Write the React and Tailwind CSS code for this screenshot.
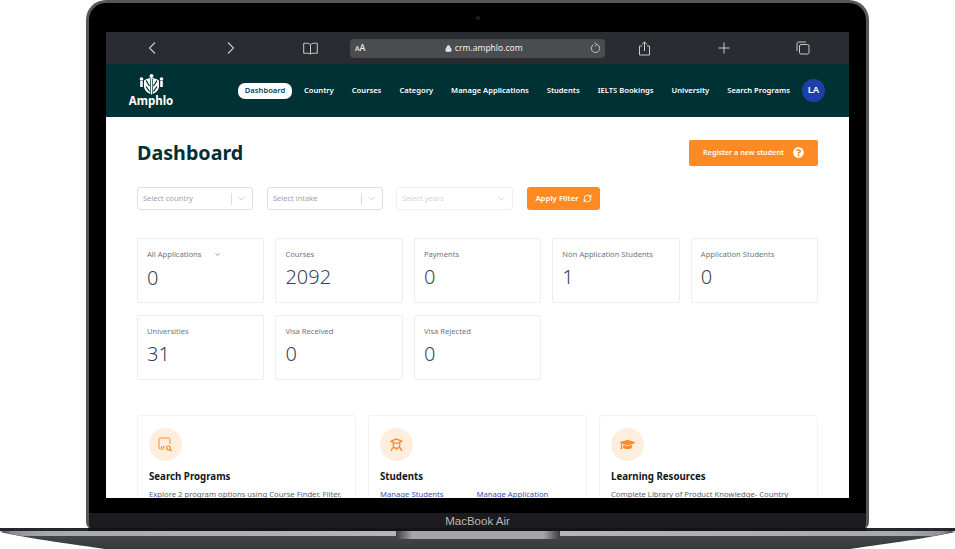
import { ChevronDown, RefreshCw, Lock } from 'lucide-react'
import { FaGraduationCap, FaQuestionCircle } from 'react-icons/fa'

const navItems = ['Country', 'Courses', 'Category', 'Manage Applications', 'Students', 'IELTS Bookings', 'University', 'Search Programs']

const statsTop = [
  { label: 'Courses', value: '2092' },
  { label: 'Payments', value: '0' },
  { label: 'Non Application Students', value: '1' },
  { label: 'Application Students', value: '0' },
]
const statsBottom = [
  { label: 'Universities', value: '31' },
  { label: 'Visa Received', value: '0' },
  { label: 'Visa Rejected', value: '0' },
]

function Logo() {
  return (
    <svg width="25" height="21" viewBox="0 0 25 21" fill="none">
      <circle cx="12.500" cy="2" r="2" fill="#fff" />
      <circle cx="2.500" cy="5" r="1.800" fill="#fff" />
      <circle cx="22.500" cy="5" r="1.800" fill="#fff" />
      <path d="M2.500 7v6M22.500 7v6" stroke="#fff" strokeWidth="2.600" />
      <path d="M5 6.500c2-1.700 4.500-2.300 7.500-2.300s5.500.6 7.500 2.300v5.500c0 4-3 7-7.500 8.500C8 19 5 16 5 12z" fill="#fff" />
      <path d="M7 6.500l3.500 5.500M18 6.500l-3.500 5.500M7 12.500l3.500 5M18 12.500l-3.500 5" stroke="#003135" strokeWidth="1.300" />
      <path d="M11.500 5v15.500M13.500 5v15.500" stroke="#003135" strokeWidth="0.700" />
    </svg>
  )
}

function SafariBar() {
  const stroke = '#c9cacc'
  return (
    <div className="flex h-[32px] items-center bg-[#292c30]">
      <svg className="ml-[41px]" width="10" height="14" viewBox="0 0 10 14" fill="none">
        <path d="M8 1.500 2.500 7 8 12.500" stroke={stroke} strokeWidth="1.100" />
      </svg>
      <svg className="ml-[69px]" width="10" height="14" viewBox="0 0 10 14" fill="none">
        <path d="M2 1.500 7.500 7 2 12.500" stroke={stroke} strokeWidth="1.100" />
      </svg>
      <svg className="ml-[67px]" width="15" height="13" viewBox="0 0 15 13" fill="none">
        <path d="M7.500 2.500C6 1.200 3.500 1 .7 1.300v10c2.800-.3 5.300-.1 6.800.7 1.500-.8 4-1 6.800-.7v-10C11.500 1 9 1.200 7.500 2.500zM7.500 2.500V12" stroke={stroke} strokeWidth="1" />
      </svg>
      <div className="ml-[32px] flex h-[19px] w-[255px] items-center rounded-[4px] bg-[#4a4c50] pl-[5px] pr-[4px] text-[#eeeeef]">
        <span className="flex items-baseline font-medium">
          <span className="text-[7px]">A</span>
          <span className="text-[9px]">A</span>
        </span>
        <div className="flex flex-1 items-center justify-center gap-[3px] pl-[12px] text-[8.500px]">
          <Lock size={7} fill="#e4e4e5" />
          <span>crm.amphlo.com</span>
        </div>
        <svg width="11" height="12" viewBox="0 0 11 12" fill="none">
          <path d="M6.500 2.300a4.200 4.200 0 1 1-3.200.5M4.500 .6l2.200 1.700-2 1.900" stroke={stroke} strokeWidth="0.900" />
        </svg>
      </div>
      <svg className="ml-[33px]" width="13" height="15" viewBox="0 0 13 15" fill="none">
        <path d="M4 5H1.500v9h10V5H9M6.500 10V1M4 3.300 6.500 1 9 3.300" stroke={stroke} strokeWidth="1" />
      </svg>
      <svg className="ml-[67px]" width="12" height="12" viewBox="0 0 12 12" fill="none">
        <path d="M6 .5v11M.5 6h11" stroke={stroke} strokeWidth="1" />
      </svg>
      <svg className="ml-[66px]" width="14" height="14" viewBox="0 0 14 14" fill="none">
        <rect x="3.500" y="3.500" width="9.500" height="9.500" rx="1.500" stroke={stroke} />
        <path d="M1 10V2.500A1.500 1.500 0 0 1 2.500 1H10" stroke={stroke} />
      </svg>
    </div>
  )
}

function TopNav() {
  return (
    <div className="flex h-[53px] items-center bg-[#003135] pl-[23px] text-white">
      <div className="flex w-[44px] flex-col items-center">
        <Logo />
        <span className="mt-[-1px] text-[11.500px] font-bold leading-[14px]">Amphlo</span>
      </div>
      <div className="ml-[65px] flex items-center gap-[18px] text-[7.600px] font-semibold">
        <span className="-mr-[6px] flex h-[16px] w-[54px] items-center justify-center rounded-[7px] bg-white text-[#003f5c]">Dashboard</span>
        {navItems.map((item) => (
          <span key={item} className="whitespace-nowrap">{item}</span>
        ))}
      </div>
      <div className="ml-[12px] flex size-[23px] items-center justify-center rounded-full bg-[#1e3ea8] text-[9.500px] font-semibold">LA</div>
    </div>
  )
}

function SelectBox({ label, muted, plain, w }) {
  return (
    <div className={`flex h-[23px] items-center rounded-[3px] border pl-[5px] pr-[5px] text-[7.500px] ${w} ${muted ? 'border-[#f0f0f0] text-[#d5d5d5]' : 'border-[#e0e0e0] text-[#a3a3a3]'}`}>
      <span className="flex-1">{label}</span>
      {!plain && <span className="mr-[4px] h-[12px] w-px bg-[#dddddd]" />}
      <ChevronDown size={11} strokeWidth={1.200} className={muted ? 'text-[#bbbbbb]' : 'text-[#aaaaaa]'} />
    </div>
  )
}

function StatCard({ label, value }) {
  return (
    <div className="h-[65px] rounded-[2px] border border-[#eeeeee] pl-[9px] pt-[8px]">
      <div className="text-[7.600px] leading-[14px] text-[#6f7680]">{label}</div>
      <div className="mt-[2px] text-[20px] font-light leading-[28px] text-[#3a4556]">{value}</div>
    </div>
  )
}

function ActionCard({ icon, title, children }) {
  return (
    <div className="h-[100px] rounded-[3px] border border-[#f3f3f3] pl-[11px] pt-[12px]">
      <div className="flex size-[33px] items-center justify-center rounded-full bg-[#ffeedd]">{icon}</div>
      <div className="mt-[9px] text-[9.700px] font-bold leading-[14px] text-[#101820]">{title}</div>
      <div className="mt-[4px] text-[7.700px] leading-[12px] text-[#5c6470]">{children}</div>
    </div>
  )
}

function Dashboard() {
  return (
    <div className="flex-1 overflow-hidden bg-white px-[31px] pt-[22px]">
      <div className="flex items-center justify-between">
        <h1 className="text-[19.700px] font-bold leading-[27px] text-[#023034]">Dashboard</h1>
        <button className="flex h-[26px] w-[129px] items-center justify-center gap-[9px] rounded-[2px] bg-[#fd8a22] text-[7.200px] font-semibold text-white">
          Register a new student
          <FaQuestionCircle size={11} />
        </button>
      </div>

      <div className="mt-[21px] flex items-center">
        <SelectBox label="Select country" w="w-[116px]" />
        <div className="w-[14px]" />
        <SelectBox label="Select intake" w="w-[116px]" />
        <div className="w-[13px]" />
        <SelectBox label="Select years" muted plain w="w-[117px]" />
        <button className="ml-[14px] flex h-[23px] w-[73px] items-center justify-center gap-[4px] rounded-[3px] bg-[#fd8a22] text-[7.800px] font-semibold text-white">
          Apply Filter
          <RefreshCw size={9} strokeWidth={2.500} />
        </button>
      </div>

      <div className="mt-[28px] grid grid-cols-5 gap-x-[11.250px] gap-y-[12px]">
        <div className="h-[65px] rounded-[2px] border border-[#eeeeee] pl-[9px] pt-[8px]">
          <div className="flex items-center text-[7.600px] leading-[14px] text-[#6f7680]">
            All Applications
            <ChevronDown size={7} strokeWidth={2} className="ml-[13px] text-[#555555]" />
          </div>
          <div className="mt-[3px] text-[20px] font-light leading-[28px] text-[#3a4556]">0</div>
        </div>
        {statsTop.map((s) => <StatCard key={s.label} {...s} />)}
        {statsBottom.map((s) => <StatCard key={s.label} {...s} />)}
      </div>

      <div className="mt-[35px] grid grid-cols-3 gap-x-[12px]">
        <ActionCard
          title="Search Programs"
          icon={
            <svg width="15" height="15" viewBox="0 0 15 15" fill="none" stroke="#fd8a22" strokeWidth="1">
              <path d="M6 12H2.500A1.500 1.500 0 0 1 1 10.500v-8A1.500 1.500 0 0 1 2.500 1h8A1.500 1.500 0 0 1 12 2.500V7" />
              <circle cx="10.500" cy="11" r="2" strokeWidth="1.200" />
              <path d="m12 12.500 1.800 1.800M3.500 11V9.500M5.500 11V9" strokeWidth="1.200" />
            </svg>
          }
        >
          Explore 2 program options using Course Finder. Filter,
        </ActionCard>
        <ActionCard
          title="Students"
          icon={
            <svg width="13" height="14" viewBox="0 0 14 15" fill="none" stroke="#fd8a22" strokeWidth="1.400">
              <path d="M7 1 1 3.500 7 6l6-2.500zM3.500 5v2.500a3.500 3.500 0 0 0 7 0V5M1.500 14c0-2.500 2-4 3-4L7 12l2.500-2c1 0 3 1.500 3 4" />
            </svg>
          }
        >
          <div className="flex gap-[33px] text-[#3f51b5] underline">
            <span>Manage Students</span>
            <span>Manage Application</span>
          </div>
        </ActionCard>
        <ActionCard title="Learning Resources" icon={<FaGraduationCap size={15} color="#fd8a22" />}>
          Complete Library of Product Knowledge- Country
        </ActionCard>
      </div>
    </div>
  )
}

function Base() {
  return (
    <svg className="-mt-[2px] block" width="955" height="21" viewBox="0 0 955 21">
      <defs>
        <linearGradient id="deck" x1="0" y1="0" x2="0" y2="1">
          <stop offset="0" stopColor="#4a4b50" />
          <stop offset="1" stopColor="#36373b" />
        </linearGradient>
        <linearGradient id="bandLeft" x1="0" y1="0" x2="1" y2="0">
          <stop offset="0" stopColor="#3a3b3f" />
          <stop offset="0.03" stopColor="#8e8f93" />
          <stop offset="0.12" stopColor="#a8a9ad" />
          <stop offset="1" stopColor="#b4b5b8" />
        </linearGradient>
        <linearGradient id="bandRight" x1="1" y1="0" x2="0" y2="0">
          <stop offset="0" stopColor="#3a3b3f" />
          <stop offset="0.03" stopColor="#8e8f93" />
          <stop offset="0.12" stopColor="#a8a9ad" />
          <stop offset="1" stopColor="#b4b5b8" />
        </linearGradient>
        <linearGradient id="notch" x1="0" y1="0" x2="1" y2="0">
          <stop offset="0" stopColor="#3c3d41" />
          <stop offset="0.1" stopColor="#a5a6a9" />
          <stop offset="0.9" stopColor="#a5a6a9" />
          <stop offset="1" stopColor="#3c3d41" />
        </linearGradient>
      </defs>
      <path d="M0 4h955v0C925 11 875 17 850 21H105C80 17 30 11 0 4z" fill="url(#deck)" />
      <path d="M0 3h396v5H22C14 7 7 5 0 3z" fill="url(#bandLeft)" />
      <path d="M955 3H560v5h373c8-1 15-3 22-5z" fill="url(#bandRight)" />
      <path d="M396 2h164v7a2 2 0 0 1-2 2H398a2 2 0 0 1-2-2z" fill="url(#notch)" />
      <path d="M0 0h88v3H0zM867 0h88v3H867z" fill="#23262b" />
      <path d="M88 0h779v3H88z" fill="#141416" />
    </svg>
  )
}

export default function App() {
  return (
    <div className="h-[549px] w-[955px] overflow-hidden bg-white font-['Noto_Sans',sans-serif]">
      <div className="ml-[86px] flex h-[530px] w-[783px] flex-col rounded-t-[20px] rounded-b-[8px] border-[3px] border-b-0 border-[#55575b] bg-black">
        <div className="flex h-[29px] items-center justify-center">
          <span className="size-[4px] rounded-full bg-[#1c1f24]" />
        </div>
        <div className="mx-[17px] flex h-[466px] flex-col overflow-hidden">
          <SafariBar />
          <TopNav />
          <Dashboard />
        </div>
        <div className="mt-[15px] flex h-[17px] flex-1 items-center justify-center rounded-b-[8px] bg-[#1c1c1e] pt-[1px] font-['Liberation_Sans',sans-serif] text-[11.500px] text-[#b9b9b9]">
          MacBook Air
        </div>
      </div>
      <Base />
    </div>
  )
}
